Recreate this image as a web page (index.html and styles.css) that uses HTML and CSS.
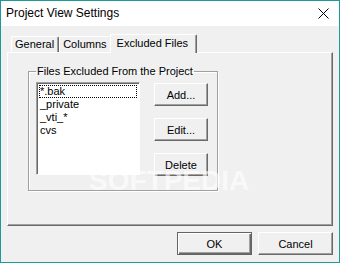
FILE: index.html
```html
<!DOCTYPE html>
<html lang="en">
<head>
  <meta charset="UTF-8">
  <title>Project View Settings</title>
  <link rel="stylesheet" href="styles.css">
</head>
<body>
  <div class="window">
    <div class="titlebar">
      <span class="title">Project View Settings</span>
      <svg class="close" width="11" height="11" viewBox="0 0 11 11">
        <path d="M0.5 0.5 L10.5 10.5 M10.5 0.5 L0.5 10.5" stroke="#000" stroke-width="1" fill="none"/>
      </svg>
    </div>

    <div class="body">
      <div class="tabs">
        <div class="tab first">General</div>
        <div class="tab">Columns</div>
        <div class="tab active">Excluded Files</div>
      </div>

      <div class="panel">
        <fieldset class="group">
          <legend>Files Excluded From the Project</legend>
          <div class="group-inner">
            <div class="listbox">
              <div class="item focus">*.bak</div>
              <div class="item">_private</div>
              <div class="item">_vti_*</div>
              <div class="item">cvs</div>
            </div>
            <div class="side-buttons">
              <div class="btn small">Add...</div>
              <div class="btn small">Edit...</div>
              <div class="btn small">Delete</div>
            </div>
          </div>
        </fieldset>
      </div>

      <div class="footer">
        <div class="btn wide default">OK</div>
        <div class="btn wide">Cancel</div>
      </div>
    </div>

    <div class="watermark">SOFTPEDIA</div>
  </div>
</body>
</html>
```

FILE: styles.css
```css
/* dialog window */
body {
  margin: 0;
  font-family: "Liberation Sans", Arial, sans-serif;
  font-size: 11px;
  color: #000;
}
.window {
  position: relative;
  width: 340px;
  height: 263px;
  box-sizing: border-box;
  border: 1px solid #1b9a9a;
  background-color: #f0f0f0;
  overflow: hidden;
}
.titlebar {
  height: 25px;
  background-color: #fff;
  display: flex;
  align-items: center;
  justify-content: space-between;
  padding: 0 10px 0 5px;
}
.title {
  font-size: 12px;
  padding-bottom: 1px;
}
.close {
  margin-top: -1px;
}
.body {
  padding: 0 6px;
}

/* tabs */
.tabs {
  height: 26px;
  display: flex;
  align-items: flex-end;
  padding-left: 4px;
}
.tab {
  height: 15px;
  line-height: 15px;
  padding: 0 4px 0 3px;
  border-top: 1px solid #fff;
  border-left: 1px solid #fff;
  border-right: 1px solid #696969;
  border-radius: 2px 2px 0 0;
  box-shadow: inset -1px 0 0 #a0a0a0;
}
.tab.active {
  position: relative;
  z-index: 1;
  height: 18px;
  line-height: 16px;
  padding: 0 8px 0 6px;
  margin-left: -2px;
  margin-bottom: -1px;
  background-color: #f0f0f0;
}
.panel {
  box-sizing: border-box;
  width: 326px;
  height: 174px;
  padding: 12px 0 0 20px;
  border-top: 1px solid #fff;
  border-left: 1px solid #fff;
  border-right: 1px solid #696969;
  border-bottom: 1px solid #696969;
  box-shadow: inset -1px -1px 0 #a0a0a0;
}

/* group box */
.group {
  margin: 0;
  width: 190px;
  height: 126px;
  box-sizing: border-box;
  padding: 0 0 0 7px;
  border: 1px solid #a0a0a0;
  box-shadow: inset 1px 1px 0 #fff, 1px 1px 0 #fff;
}
.group legend {
  padding: 0 1px;
}
.group-inner {
  display: flex;
  padding-top: 5px;
}
.listbox {
  width: 100px;
  height: 89px;
  background-color: #fff;
  border: 1px solid;
  border-color: #a0a0a0 #fff #fff #a0a0a0;
  box-shadow: inset 1px 1px 0 #696969;
  padding: 2px 0 0 2px;
}
.item {
  height: 13px;
  line-height: 13px;
  padding-left: 1px;
  width: 98px;
  box-sizing: border-box;
}
.item.focus {
  outline: 1px dotted #000;
  outline-offset: -1px;
}
.side-buttons {
  display: flex;
  flex-direction: column;
  gap: 12px;
  margin: 1px 0 0 14px;
}

/* buttons */
.btn {
  height: 23px;
  box-sizing: border-box;
  display: flex;
  align-items: center;
  justify-content: center;
  border: 1px solid;
  border-color: #fff #696969 #696969 #fff;
  box-shadow: inset -1px -1px 0 #a0a0a0;
  background-color: #f0f0f0;
}
.btn.small {
  width: 54px;
}
.btn.wide {
  width: 75px;
}
.btn.default {
  border: 1px solid #646464;
  box-shadow: inset 1px 1px 0 #fff, inset -1px -1px 0 #696969, inset -2px -2px 0 #a0a0a0;
}
.footer {
  display: flex;
  justify-content: flex-end;
  gap: 6px;
  padding-top: 6px;
}

/* watermark over the panel */
.watermark {
  position: absolute;
  left: 88px;
  top: 173px;
  font-family: "Liberation Sans", sans-serif;
  font-weight: bold;
  font-size: 28px;
  line-height: 14px;
  color: #fff;
  opacity: 0.6;
}
```
